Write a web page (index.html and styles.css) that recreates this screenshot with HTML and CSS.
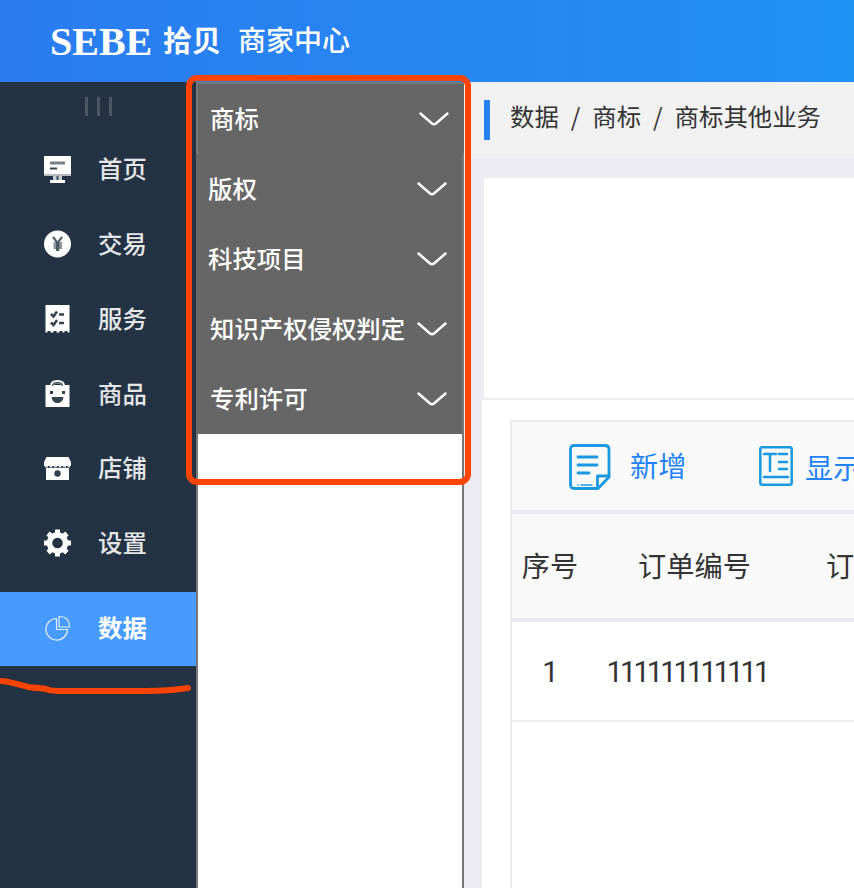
FILE: index.html
```
<!DOCTYPE html>
<html lang="zh-CN">
<head>
<meta charset="utf-8">
<title>SEBE 拾贝 商家中心</title>
<link rel="stylesheet" href="styles.css">
</head>
<body>
<header class="topbar"><span class="brand">SEBE</span><span class="brand-cn">拾贝</span><span class="site">商家中心</span></header>
<div class="layout">
  <nav class="sidebar">
    <div class="grip"><i></i><i></i><i></i></div>
    <a class="nav-item"><svg width="28" height="28" viewBox="0 0 28 28"><path fill="#fff" d="M0 1h27v20H0z"/><path fill="#b4bac0" d="M0 19h27v2H0z"/><path stroke="#75808a" stroke-width="3" d="M6 8h15"/><path stroke="#34444f" stroke-width="2" d="M6 13.500h7"/><path fill="#cbd0d3" d="M9 21h9v5H9z"/><path stroke="#40505e" stroke-width="2" d="M13.500 21v5"/><path fill="#fff" d="M6 25h15v3H6z"/></svg><span>首页</span></a>
    <a class="nav-item"><svg width="28" height="28" viewBox="0 0 28 28"><circle cx="13.500" cy="14" r="13.500" fill="#fff"/><path d="M9 7l4.500 6L18 7" fill="none" stroke="#57636d" stroke-width="2.200"/><path fill="#8b949b" d="M9.500 12h8.500v7H9.500z"/><path fill="#4c5963" d="M12 12h3.200v9H12z"/></svg><span>交易</span></a>
    <a class="nav-item"><svg width="28" height="28" viewBox="0 0 28 28"><path fill="#fff" d="M1.500 0h24v27.500h-2V26h-3v1.500h-2V26h-3v1.500h-3V26h-3v1.500h-3V26h-3v1.500h-2z"/><path d="M7 9l2.500 2.500L13 6.500M7 17.500L9.500 20l3.500-5M15 9.500h5M15 18h5" fill="none" stroke="#34444f" stroke-width="2.500"/></svg><span>服务</span></a>
    <a class="nav-item"><svg width="28" height="28" viewBox="0 0 28 28"><path fill="#fff" d="M1.500 5h24v22h-24z"/><path d="M7 6q0-5 6.500-5T20 6" fill="none" stroke="#fff" stroke-width="2"/><path d="M8.500 6q1-3 5-3t5 3" fill="none" stroke="#6d7982" stroke-width="1.500"/><path fill="#34444f" d="M6 11h3v3H6zm12 0h3v3h-3zM7.500 17h12q-1 6-6 6t-6-6z"/></svg><span>商品</span></a>
    <a class="nav-item"><svg width="28" height="28" viewBox="0 0 28 28"><path fill="#fff" d="M2.500 2h22L27 7v4H0V7zM2 13h23v12H2z"/><path d="M1 11.500h25" stroke="#d7dbdd" stroke-width="2" stroke-dasharray="3 1.500"/><circle cx="13.500" cy="18.500" r="3.200" fill="#304150"/></svg><span>店铺</span></a>
    <a class="nav-item"><svg width="28" height="28" viewBox="0 0 28 28"><circle cx="13.500" cy="14" r="8" fill="none" stroke="#fff" stroke-width="5.500"/><path d="M13.500.5v5M13.500 22.500v5M0 14h5M22 14h5M4 4.500L8 8M19 20l4 3.500M23 4.500L19 8M8 20l-4 3.500" stroke="#fff" stroke-width="5"/></svg><span>设置</span></a>
    <a class="nav-item active"><svg width="28" height="28" viewBox="0 0 28 28"><path d="M12.500 4.500A10.800 10.800 0 1 0 23.500 15.500H12.500zM15 2.500v10.500h10.500Q25.500 2.500 15 2.500z" fill="none" stroke="#e3f0ff" stroke-width="1.200"/></svg><span>数据</span></a>
  </nav>
  <aside class="submenu">
    <div class="sub-item first"><span>商标</span><svg class="chev" viewBox="0 0 30 14"><path d="M1.500 1.500L13 11.500q2 1.500 4 0L28.500 1.500"/></svg></div>
    <div class="sub-item flush"><span>版权</span><svg class="chev" viewBox="0 0 30 14"><path d="M1.500 1.500L13 11.500q2 1.500 4 0L28.500 1.500"/></svg></div>
    <div class="sub-item flush"><span>科技项目</span><svg class="chev" viewBox="0 0 30 14"><path d="M1.500 1.500L13 11.500q2 1.500 4 0L28.500 1.500"/></svg></div>
    <div class="sub-item"><span>知识产权侵权判定</span><svg class="chev" viewBox="0 0 30 14"><path d="M1.500 1.500L13 11.500q2 1.500 4 0L28.500 1.500"/></svg></div>
    <div class="sub-item"><span>专利许可</span><svg class="chev" viewBox="0 0 30 14"><path d="M1.500 1.500L13 11.500q2 1.500 4 0L28.500 1.500"/></svg></div>
  </aside>
  <main class="main">
    <div class="crumbs"><i class="mark"></i><span>数据</span><b>/</b><span>商标</span><b>/</b><span>商标其他业务</span></div>
    <section class="blank"></section>
    <section class="panel">
      <div class="table">
        <div class="tools">
          <svg class="ic-add" width="42" height="46" viewBox="0 0 42 46" fill="none" stroke="#1899e0" stroke-width="2.800" stroke-linecap="round" stroke-linejoin="round"><path d="M5 1.500h31q4 0 4 4V33L29 44.500H5q-3.500 0-3.500-4v-35q0-4 3.500-4z"/><path d="M28.500 44V32H40M9 13h19M9 21h19M9 29h11"/><path stroke-width="1.300" d="M9 41h.5M12 41h11"/></svg>
          <span class="add">新增</span>
          <svg class="ic-show" width="34" height="40" viewBox="0 0 34 40" fill="none" stroke="#1899e0" stroke-width="2.500" stroke-linecap="round"><rect x="1.300" y="1.300" width="31.400" height="37.400" rx="2"/><path d="M5 8h12M11 8v17M20 8h8M20 16h8M20 23h8M5 31h24"/></svg>
          <span class="show">显示</span>
        </div>
        <div class="row head"><span class="c1">序号</span><span class="c2">订单编号</span><span class="c3">订</span></div>
        <div class="row data"><span class="c1">1</span><span class="c2">111111111111</span></div>
      </div>
    </section>
  </main>
</div>
<svg class="ink" width="196" height="24" viewBox="0 0 196 24"><path d="M2 6C12 7 20 10 28 12Q36 13 44 13.500Q50 16 57 16H145Q170 16 188 13" fill="none" stroke="#ff4300" stroke-width="6" stroke-linecap="round" stroke-linejoin="round"/></svg>
<div class="frame"></div>
</body>
</html>
```
FILE: styles.css
```
* { box-sizing: border-box; }
body {
  margin: 0;
  width: 854px;
  height: 888px;
  overflow: hidden;
  position: relative;
  font-family: "Noto Sans CJK SC", sans-serif;
  font-size: 24.4px;
  line-height: 1;
  color: #333;
  white-space: nowrap;
}
svg { display: block; flex: none; }
i, b { font-style: normal; font-weight: 400; }
.topbar {
  height: 82px;
  padding: 0 0 4px 50px;
  display: flex;
  align-items: center;
  color: #fff;
  background: linear-gradient(90deg, #2b7cf0, #2090f3);
}
.brand { width: 113px; margin-top: 5px; font: bold 40px/1 "Liberation Serif", serif; }
.brand-cn { width: 75px; font-size: 29px; font-weight: 700; }
.site { font-size: 28px; font-weight: 500; }
.layout { display: flex; height: 806px; }
.sidebar { width: 196px; flex: none; background: #233343; }
.grip { height: 50px; padding: 15px 0 0 85px; display: flex; gap: 9px; }
.grip i { width: 3px; height: 19px; background: #4b5967; }
.nav-item {
  height: 74.8px;
  padding-left: 44px;
  display: flex;
  align-items: center;
  gap: 26px;
  color: #e4e6e8;
  font-weight: 500;
}
.nav-item span, .sub-item span { margin-top: -2px; }
.nav-item.active {
  height: 74px;
  margin-top: 11.200px;
  padding-bottom: 2px;
  background: #479bff;
  color: #fff;
  font-weight: 700;
}
.submenu {
  width: 268px;
  flex: none;
  background: #fff;
  border: solid #777;
  border-width: 0 2px;
}
.sub-item {
  height: 70px;
  padding: 0 15px 0 12px;
  margin-left: -2px;
  display: flex;
  align-items: center;
  justify-content: space-between;
  background: #666;
  color: #fff;
  font-weight: 500;
}
.sub-item:not(.flush):not(.first) { padding-left: 14px; }
.sub-item.first {
  height: 72px;
  margin-right: -2px;
  border: solid #777;
  border-width: 2px 0 0 2px;
}
.chev { width: 30px; height: 14px; }
.chev path { fill: none; stroke: #fff; stroke-width: 2.400; stroke-linecap: round; }
.main { flex: 1; min-width: 0; background: #ebebf1; }
.crumbs {
  height: 76px;
  padding: 0 0 7px 20px;
  display: flex;
  align-items: center;
  background: #f1f1f1;
}
.crumbs b { width: 33.500px; text-align: center; }
.mark { width: 6px; height: 40px; margin: 7px 20px 0 0; background: #2484f2; }
.blank { height: 220px; margin: 20px 0 2px 20px; background: #fff; }
.panel { height: 488px; margin-left: 18px; padding: 20px 0 0 28px; background: #fff; }
.table { height: 468px; border: solid #ebebf1; border-width: 2px 0 0 2px; }
.tools {
  height: 92px;
  padding-left: 57px;
  display: flex;
  align-items: center;
  background: #f9f9f9;
  border-bottom: 4px solid #ebebf1;
  color: #2383f5;
  font-size: 28.200px;
}
.tools span { flex: none; }
.ic-add { margin-top: 2px; }
.add { width: 129px; margin: -2px 0 0 19px; }
.show { margin: 2px 0 0 12px; }
.row { display: flex; align-items: center; font-size: 28.200px; }
.head { height: 108px; padding-bottom: 2px; background: #f9f9f9; border-bottom: 4px solid #ebebf1; }
.data {
  height: 100px;
  padding-top: 3px;
  border-bottom: 2px solid #ebebf1;
  font-family: Roboto, sans-serif;
  font-size: 29px;
  letter-spacing: -2.900px;
}
.c1 { width: 76px; text-align: center; flex: none; }
.c2 { width: 213px; text-align: center; flex: none; margin-right: 25px; }
.data .c1 { width: 74px; }
.data .c2 { width: 202px; }
.c3 { flex: none; }
.ink { position: absolute; left: 0; top: 675px; }
.frame {
  position: absolute;
  left: 185.500px;
  top: 74.500px;
  width: 285px;
  height: 410.500px;
  border: 6px solid #ff4300;
  border-radius: 11px;
}
```
